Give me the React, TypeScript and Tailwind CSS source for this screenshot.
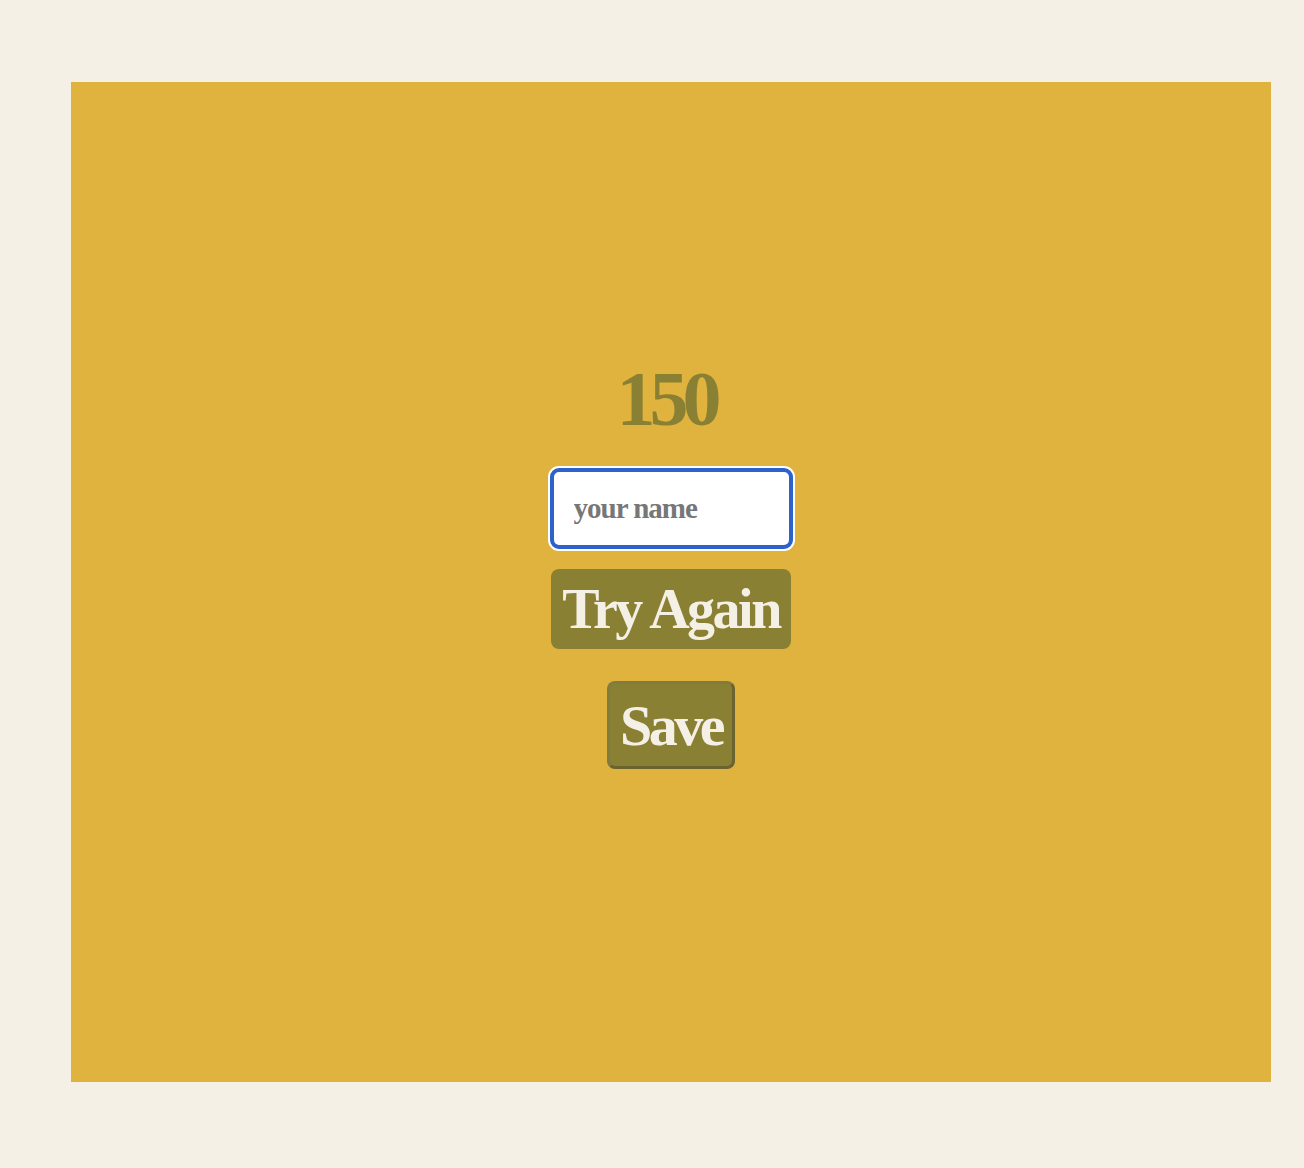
import React from 'react';

// Score card shown after a round ends: final score, name field, retry + save.

const serif = "font-['Liberation_Serif',serif]";

export default function App() {
  return (
    <div className={`min-h-[1168px] w-[1304px] bg-[#f5f0e6] pt-[82px] pl-[71px] ${serif}`}>
      <div className="flex h-[1000px] w-[1200px] flex-col items-center bg-[#e0b33e] pt-[278px]">
        <h1 className="pr-[10px] text-[78px] font-bold leading-none tracking-[-6px] text-[#8a8033]">150</h1>
        <input
          className="mt-[30px] h-[81px] w-[243px] rounded-[9px] border-[4px] border-[#2c62c9] bg-white px-[20px] text-[29px] font-bold tracking-[-1px] text-[#333] outline-none ring-2 ring-white placeholder:text-[#777]"
          placeholder="your name"
        />
        <button className="mt-[20px] flex h-[80px] w-[240px] items-center justify-center rounded-[8px] bg-[#8a8033] text-[56px] font-bold tracking-[-2.5px] text-[#f5f0e6]">
          Try Again
        </button>
        <button className="mt-[32px] flex h-[88px] w-[128px] items-center justify-center rounded-[8px] border-[3px] border-b-[#6b6430] border-l-[#827b40] border-r-[#6b6430] border-t-[#827b40] bg-[#8a8033] text-[58px] font-bold tracking-[-3.5px] text-[#f5f0e6]">
          Save
        </button>
      </div>
    </div>
  );
}
